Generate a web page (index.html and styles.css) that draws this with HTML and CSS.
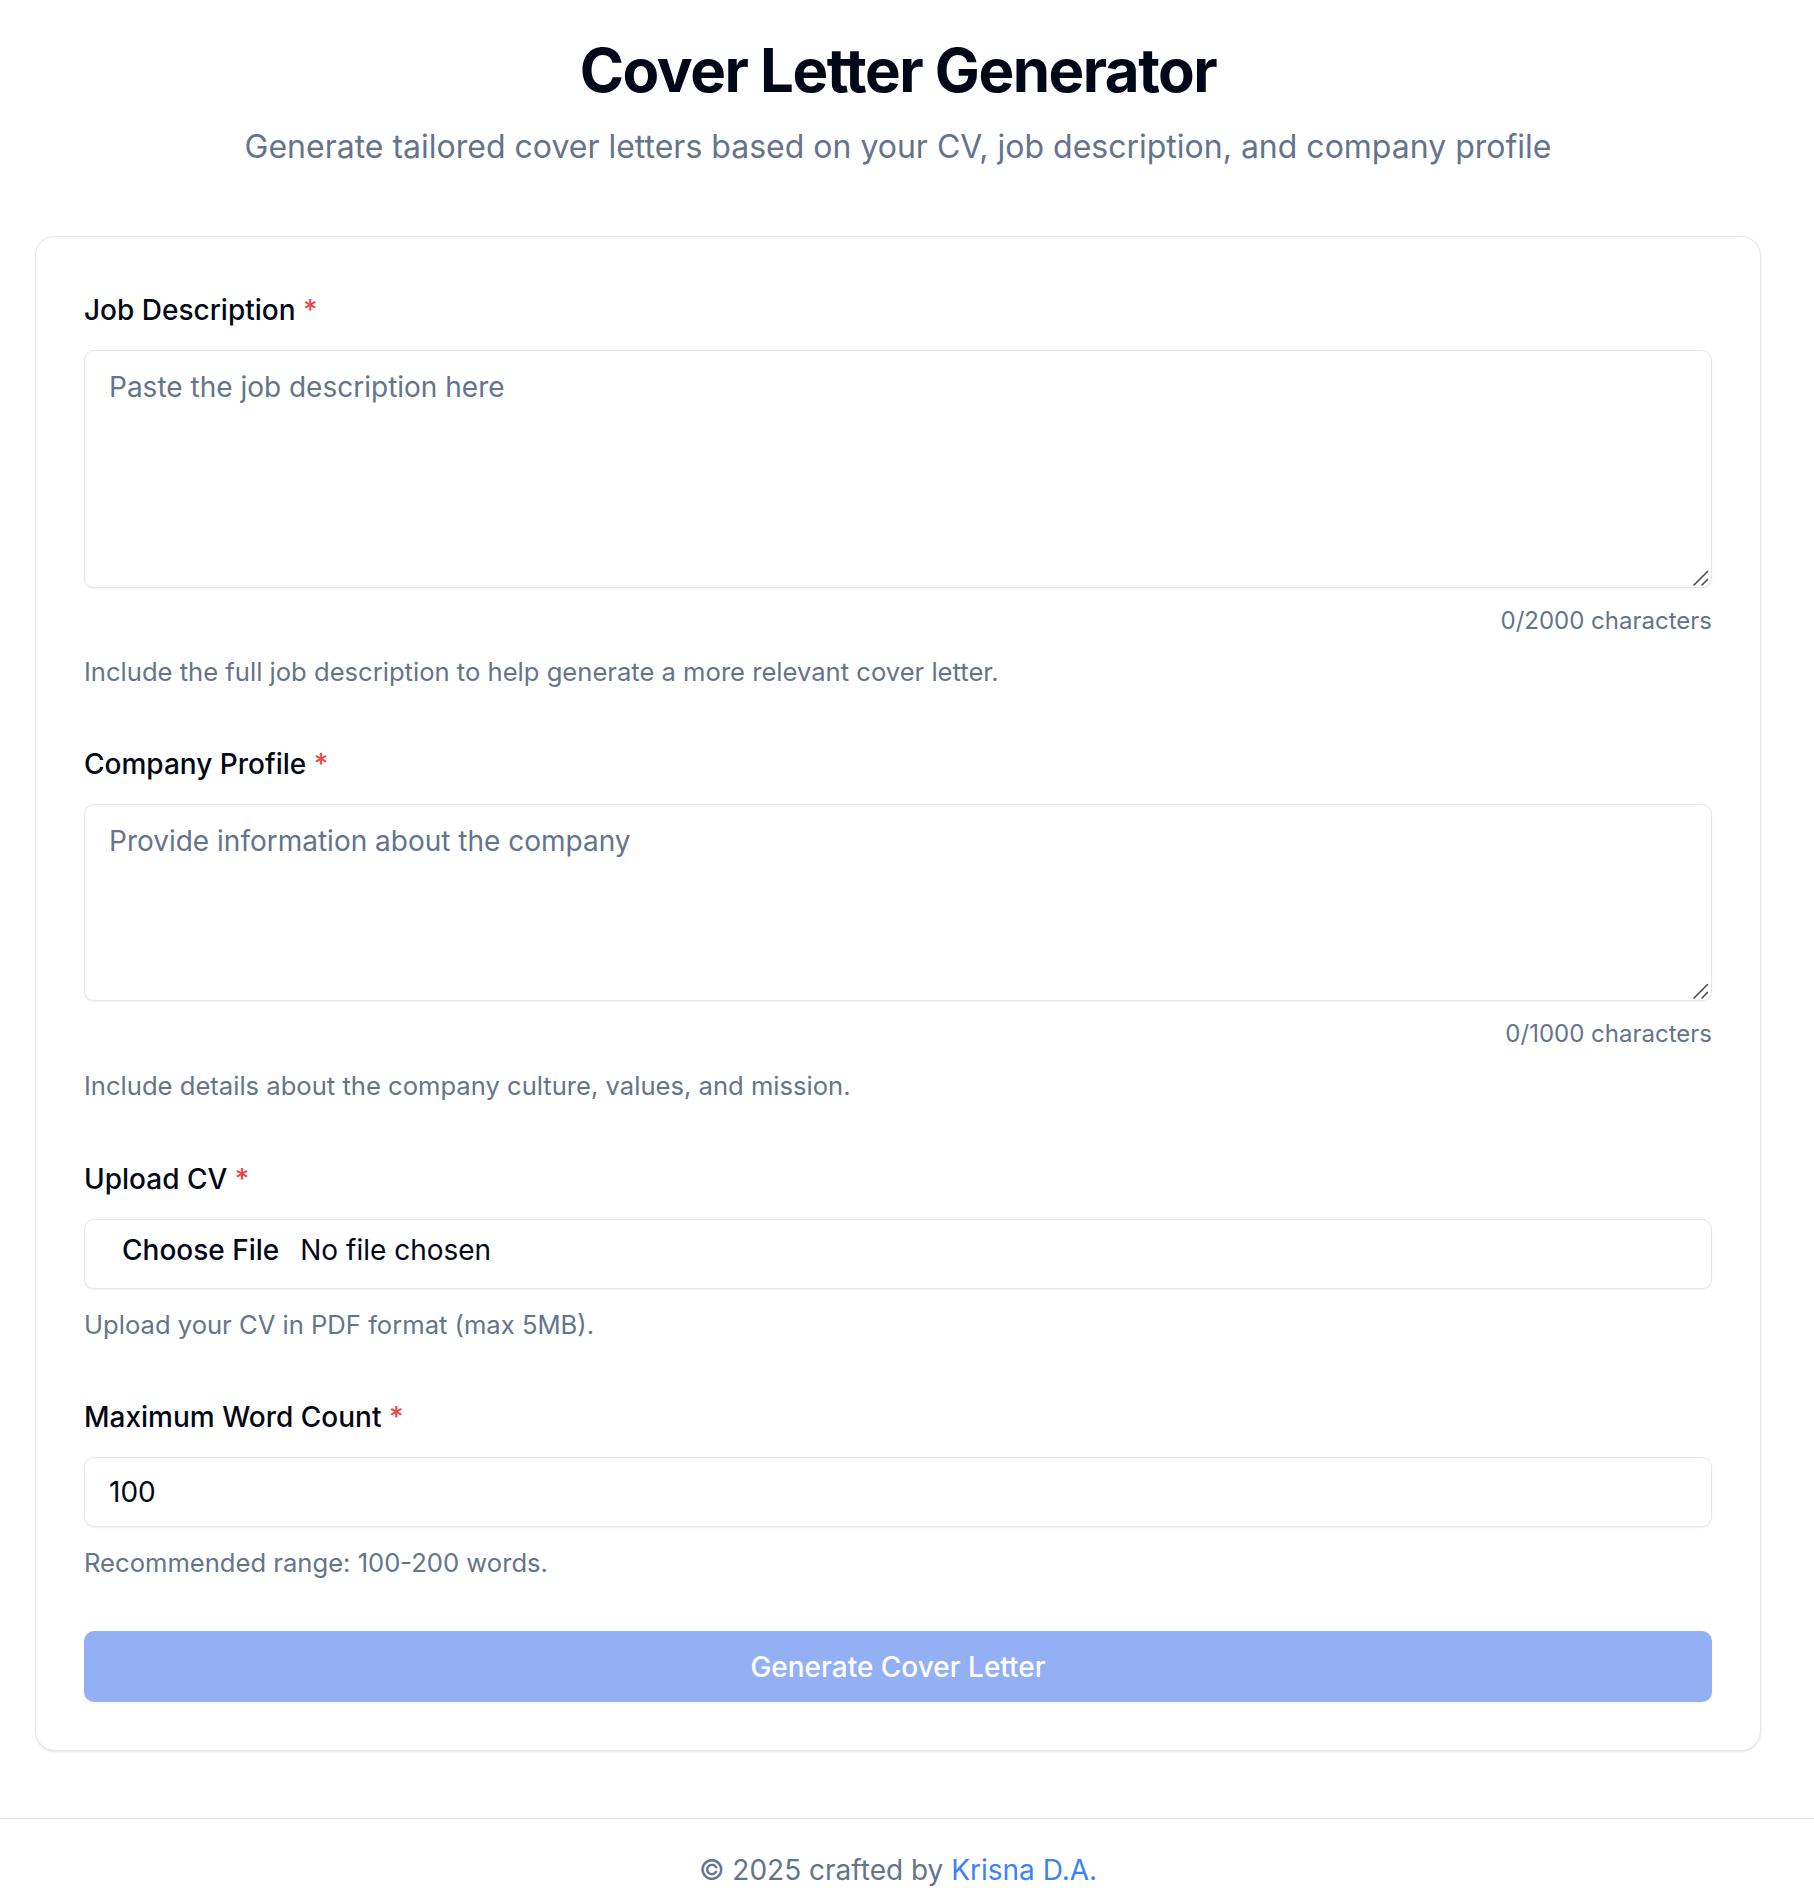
FILE: index.html
```html
<!DOCTYPE html>
<html lang="en">
<head>
<meta charset="utf-8">
<title>Cover Letter Generator</title>
<link rel="stylesheet" href="styles.css">
</head>
<body>
<div class="page">
  <header class="hero">
    <h1 class="title">Cover Letter Generator</h1>
    <p class="subtitle">Generate tailored cover letters based on your CV, job description, and company profile</p>
  </header>

  <main class="card">
    <form class="form">
      <div class="field">
        <label class="label" for="jd">Job Description <span class="req">*</span></label>
        <div class="textarea-wrap">
          <textarea id="jd" class="textarea textarea-lg" placeholder="Paste the job description here"></textarea>
          <svg class="grip" width="20" height="20" viewBox="0 0 20 20" aria-hidden="true">
            <line x1="2" y1="17" x2="15.5" y2="3.5"/>
            <line x1="10" y1="17" x2="15.5" y2="11.5"/>
          </svg>
        </div>
        <div class="counter">0/2000 characters</div>
        <p class="help help-first">Include the full job description to help generate a more relevant cover letter.</p>
      </div>

      <div class="field">
        <label class="label" for="cp">Company Profile <span class="req">*</span></label>
        <div class="textarea-wrap">
          <textarea id="cp" class="textarea textarea-md" placeholder="Provide information about the company"></textarea>
          <svg class="grip" width="20" height="20" viewBox="0 0 20 20" aria-hidden="true">
            <line x1="2" y1="17" x2="15.5" y2="3.5"/>
            <line x1="10" y1="17" x2="15.5" y2="11.5"/>
          </svg>
        </div>
        <div class="counter">0/1000 characters</div>
        <p class="help">Include details about the company culture, values, and mission.</p>
      </div>

      <div class="field">
        <label class="label" for="cv">Upload CV <span class="req">*</span></label>
        <div class="file-input" id="cv">
          <span class="file-btn">Choose File</span>
          <span class="file-name">No file chosen</span>
        </div>
        <p class="help help-tight">Upload your CV in PDF format (max 5MB).</p>
      </div>

      <div class="field">
        <label class="label" for="wc">Maximum Word Count <span class="req">*</span></label>
        <input id="wc" class="input" type="number" value="100">
        <p class="help help-tight">Recommended range: 100-200 words.</p>
      </div>

      <button type="button" class="btn">Generate Cover Letter</button>
    </form>
  </main>
</div>

<footer class="footer">
  <div class="footer-inner">&copy; 2025 crafted by <a class="link" href="#">Krisna D.A.</a></div>
</footer>
</body>
</html>
```
FILE: styles.css
```css
* { box-sizing: border-box; }

html, body {
  margin: 0;
  padding: 0;
  background: #ffffff;
}

body {
  font-family: Inter, "Noto Sans", "Liberation Sans", sans-serif;
  color: #020817;
}

.page {
  width: 1796px;
}

.hero {
  padding-top: 38px;
  text-align: center;
}

.title {
  margin: 0;
  font-size: 60px;
  line-height: 64px;
  font-weight: 700;
  letter-spacing: -0.025em;
  color: #020817;
}

.subtitle {
  margin: 23px 0 0;
  font-size: 32px;
  line-height: 44px;
  font-weight: 400;
  color: #64748b;
}

.card {
  width: 1726px;
  margin: 67px auto 0;
  padding: 53px 48px 48px;
  background: #ffffff;
  border: 1px solid #e2e8f0;
  border-radius: 20px;
  box-shadow: 0 1px 3px rgba(15, 23, 42, 0.08), 0 1px 2px -1px rgba(15, 23, 42, 0.08);
}

.form {
  display: flex;
  flex-direction: column;
}

.field {
  display: flex;
  flex-direction: column;
  margin-bottom: 54px;
}

.field:nth-child(2) {
  margin-bottom: 55px;
}

.field:nth-child(4) {
  margin-bottom: 50px;
}

.label {
  display: block;
  font-size: 28px;
  line-height: 40px;
  font-weight: 500;
  color: #020817;
  margin-bottom: 20px;
}

.req {
  color: #ef4444;
}

.textarea-wrap {
  position: relative;
}

.textarea {
  display: block;
  width: 100%;
  padding: 16px 24px;
  font-family: Inter, "Noto Sans", sans-serif;
  font-size: 28px;
  line-height: 40px;
  color: #020817;
  background: #ffffff;
  border: 1px solid #e2e8f0;
  border-radius: 10px;
  box-shadow: 0 1px 2px rgba(15, 23, 42, 0.06);
  resize: none;
  outline: none;
  margin: 0;
}

.grip {
  position: absolute;
  right: 0;
  bottom: 0;
  pointer-events: none;
}

.grip line {
  stroke: #4a4a4f;
  stroke-width: 1.6;
  stroke-linecap: round;
}

.textarea::placeholder,
.input::placeholder {
  color: #64748b;
  opacity: 1;
}

.textarea-lg { height: 238px; }
.textarea-md { height: 197px; }

.counter {
  margin-top: 17px;
  text-align: right;
  font-size: 24px;
  line-height: 32px;
  color: #64748b;
}

.help {
  margin: 18px 0 0;
  font-size: 25.6px;
  line-height: 36px;
  color: #64748b;
}

.help-first { margin-top: 17px; }

.help-tight { margin-top: 18px; }

.file-input {
  display: flex;
  align-items: flex-start;
  height: 70px;
  padding: 10px 24px 0;
  border: 1px solid #e2e8f0;
  border-radius: 10px;
  background: #ffffff;
  box-shadow: 0 1px 2px rgba(15, 23, 42, 0.06);
  font-size: 28px;
  line-height: 40px;
}

.file-btn {
  font-weight: 500;
  color: #020817;
  padding-left: 13px;
  margin-right: 21px;
}

.file-name {
  color: #020817;
}

.input {
  display: block;
  width: 100%;
  height: 70px;
  padding: 0 24px;
  margin: 0;
  font-family: Inter, "Noto Sans", sans-serif;
  font-size: 28px;
  line-height: 40px;
  color: #020817;
  background: #ffffff;
  border: 1px solid #e2e8f0;
  border-radius: 10px;
  box-shadow: 0 1px 2px rgba(15, 23, 42, 0.06);
  outline: none;
  -moz-appearance: textfield;
}

.input::-webkit-inner-spin-button,
.input::-webkit-outer-spin-button {
  -webkit-appearance: none;
  margin: 0;
}

.btn {
  display: block;
  width: 100%;
  height: 71px;
  margin: 0;
  padding: 0;
  font-family: Inter, "Noto Sans", sans-serif;
  font-size: 28px;
  font-weight: 500;
  color: #ffffff;
  background: #93b0f4;
  border: none;
  border-radius: 10px;
  box-shadow: 0 1px 3px rgba(15, 23, 42, 0.06);
  cursor: not-allowed;
}

.footer {
  margin-top: 67px;
  border-top: 1px solid #e2e8f0;
  padding-top: 31px;
  padding-bottom: 40px;
}

.footer-inner {
  width: 1796px;
  text-align: center;
  font-size: 28px;
  line-height: 40px;
  color: #64748b;
}

.link {
  color: #3b82f6;
  text-decoration: none;
}
```
